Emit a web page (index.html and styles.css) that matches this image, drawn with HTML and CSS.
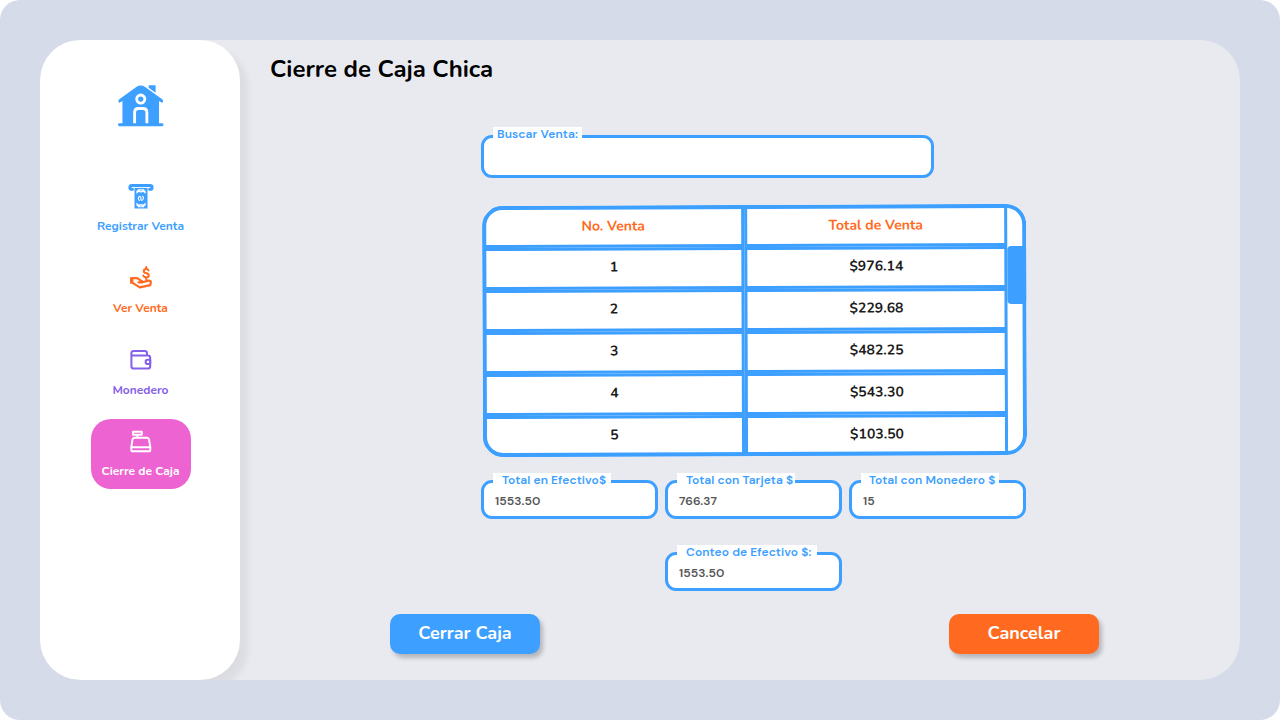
FILE: index.html
```html
<!DOCTYPE html>
<html lang="es">
<head>
<meta charset="utf-8">
<title>Cierre de Caja Chica</title>
<link rel="stylesheet" href="styles.css">
</head>
<body>
<div class="screen">
  <div class="panel">
    <nav class="sidebar">
      <svg class="home" viewBox="0 0 46 42" width="45.500" height="42">
        <path fill="#3d9fff" d="M31 0h7v7.500L31 2.500zM1 14.500 18.500 1.800Q23 -1 27.500 1.800L45 14.500Q46.500 17 44.500 17.800L41.500 16V38.500h3a1.500 1.500 0 0 1 0 3h-43a1.500 1.500 0 0 1 0-3H4.500V16l-3 1.800Q-.5 17 1 14.500z"/>
        <circle cx="23" cy="14" r="4.100" fill="#3d9fff" stroke="#fff" stroke-width="2.900"/>
        <path d="M16.800 38.500V27.500q0-4 4-4h4.400q4 0 4 4v11" fill="none" stroke="#fff" stroke-width="2.900"/>
      </svg>
      <a class="item blue">
        <svg viewBox="0 0 26 26" width="26" height="26">
          <path d="M4.500 6.300H3.800a1.900 1.900 0 0 1 0-3.800h18.400a1.900 1.900 0 0 1 0 3.800H21.500" fill="none" stroke="currentColor" stroke-width="3" stroke-linecap="round"/>
          <path d="M6.500 4.500h13v21h-13z" fill="currentColor"/>
          <path d="M4.500 4.500h17" stroke="#fff" stroke-width=".8"/>
          <path d="M10 6.300h6q.2 1.400 1.600 1.600v3.200Q16 8.800 13 8.800t-4.600 2.300V7.900Q9.800 7.700 10 6.300zM10 24.200h6q.2-1.400 1.600-1.600v-3.200Q16 21.700 13 21.700t-4.600-2.300v3.200q1.400.2 1.600 1.600z" fill="#fff"/>
          <path d="M12 8.400h2v1h-2zM12 21.200h2v1h-2z" fill="#fff"/>
          <path d="M12.400 7.400h1.200M12.400 23h1.200" stroke="currentColor" stroke-width="1"/>
          <path d="M11.300 17.500q-1.700-1.400-.6-3.300t2.200.2q-.3 3 .8 3t1.600-1.700-.7-2.500" fill="none" stroke="#fff" stroke-width="1.100" stroke-linecap="round"/>
        </svg>
        <span class="t1">Registrar Venta</span>
      </a>
      <a class="item orange">
        <svg viewBox="0 0 26 26" width="26" height="26">
          <path d="M20.500 5.500Q20 4.100 18.200 4.100q-2.400 0-2.400 1.900t2.500 2.200 2.500 2.200-2.700 2q-2.200 0-2.800-1.800M18.200 2v2M18.200 12.500v1.700" fill="none" stroke="currentColor" stroke-width="2" stroke-linecap="round"/>
          <path d="M2 12.200h3.400v6.500H2z" fill="currentColor"/>
          <path d="M5 13.200h4.200l3.700 2.500q1.400.2 1.500 1.600h-3.900M14.400 17.300l6-1.700q2.700-.2 2.400 1.400l-.5 3.200-10.500 2.200L5 18.100" fill="none" stroke="currentColor" stroke-width="2.200" stroke-linejoin="round" stroke-linecap="round"/>
        </svg>
        <span class="t2">Ver Venta</span>
      </a>
      <a class="item purple">
        <svg viewBox="0 0 26 26" width="26" height="26">
          <g fill="none" stroke="currentColor" stroke-width="2" stroke-linejoin="round">
            <path d="M3.400 8.500V6.200a2.300 2.300 0 0 1 2.300-2.300h11a2.300 2.300 0 0 1 2.300 2.300v2.300M3.400 8.500v10.900a2.300 2.300 0 0 0 2.300 2.200h14.200a2.300 2.300 0 0 0 2.300-2.200v-8.600a2.300 2.300 0 0 0-2.300-2.300H3.400"/>
            <path d="M22.200 12.800h-2.500a2.100 2.100 0 0 0 0 4.200h2.500z"/>
          </g>
        </svg>
        <span class="t3">Monedero</span>
      </a>
      <a class="item active">
        <svg viewBox="0 0 26 26" width="26" height="26">
          <g fill="none" stroke="currentColor" stroke-width="1.900" stroke-linejoin="round">
            <path d="M5 2.700h8.800v3H5zM9.400 5.700v3M3.300 18 4.500 10.500q.3-1.800 2-1.800H19q1.700 0 2 1.800L22.300 18v3.200q0 1-1 1h-17q-1 0-1-1zM3.300 18.300h19"/>
          </g>
        </svg>
        <span class="t4">Cierre de Caja</span>
      </a>
    </nav>
    <main class="main">
      <h1><span>Cierre de Caja Chica</span></h1>
      <div class="field search"><label class="l0">Buscar Venta:</label></div>
      <div class="table">
        <div class="cells">
          <div class="head h1c">No. Venta</div><div class="head h2c">Total de Venta</div>
          <div>1</div><div>$976.14</div>
          <div>2</div><div>$229.68</div>
          <div>3</div><div>$482.25</div>
          <div>4</div><div>$543.30</div>
          <div>5</div><div>$103.50</div>
        </div>
        <div class="track"><div class="thumb"></div></div>
      </div>
      <div class="totals">
        <div class="field"><label class="l1">Total en Efectivo$</label><span class="value">1553.50</span></div>
        <div class="field"><label class="l2">Total con Tarjeta $</label><span class="value">766.37</span></div>
        <div class="field"><label class="l3">Total con Monedero $</label><span class="value">15</span></div>
      </div>
      <div class="field count"><label class="l4">Conteo de Efectivo $:</label><span class="value">1553.50</span></div>
      <div class="actions">
        <button class="ok">Cerrar Caja</button>
        <button class="cancel">Cancelar</button>
      </div>
    </main>
  </div>
</div>
</body>
</html>
```
FILE: styles.css
```css
* { box-sizing: border-box; }
body { margin: 0; background: #fff; font-family: Nunito, Lato, sans-serif; font-weight: 700; }
.screen { width: 1280px; height: 720px; padding: 40px; background: #d6dbe9; border-radius: 20px; }
.panel { display: flex; height: 640px; background: #e9eaf0; border-radius: 40px; overflow: hidden; }
.sidebar { width: 200px; flex: none; height: 640px; background: #fff; border-radius: 40px; box-shadow: 8px 8px 6px rgba(0,0,0,.06); display: flex; flex-direction: column; align-items: center; padding: 45px 0 0 1px; }
.home { display: block; overflow: visible; }
.item { width: 100px; height: 70px; margin-bottom: 12px; padding-top: 10px; display: flex; flex-direction: column; align-items: center; font-size: 12px; line-height: 16px; white-space: nowrap; }
.item svg { display: block; margin-bottom: 9px; }
.item.blue { margin-top: 46px; color: #3d9fff; }
.orange { color: #ff6a20; }
.purple { color: #8560ea; }
.active { background: #ee63d2; color: #fff; border-radius: 20px; }
.item.active svg { margin-bottom: 8px; }
.main { flex: 1; position: relative; padding-top: 13px; }
h1 { margin: 0 0 49.500px 30px; height: 32px; font-size: 24px; line-height: 32px; color: #000; }
.field { display: flex; align-items: flex-start; width: 177px; height: 39px; background: #fff; border: 3px solid #3d9fff; border-radius: 11px; position: relative; font-family: "DM Sans", Inter, sans-serif; font-weight: 600; }
.field label { position: absolute; left: 9.500px; top: -10px; height: 14px; background: #fff; color: #3d9fff; font-size: 12px; line-height: 14px; letter-spacing: .1px; white-space: nowrap; }
.value { margin: 10px 0 0 11.500px; font-size: 12px; line-height: 16px; letter-spacing: .1px; color: #555; }
.search { width: 453px; height: 43.500px; margin-left: 240.500px; }
.field .l0 { width: 89px; padding-left: 4px; top: -10.500px; height: 14.500px; }
.field .l1 { width: 118px; padding-left: 9px; }
.field .l2 { width: 118px; padding-left: 9px; }
.field .l3 { width: 138px; padding-left: 8px; }
.field .l4 { width: 140px; padding-left: 9px; }
.table { position: relative; display: flex; width: 543.500px; height: 250.500px; margin: 27px 0 0 242.500px; background: #fff; border-radius: 20px; overflow: hidden; transform: translateX(-.4px) rotate(-.22deg); }
.table::after { content: ""; position: absolute; inset: 0; border: 4px solid #3d9fff; border-radius: 20px; }
.cells { width: 525px; flex: none; display: grid; grid-template-columns: 262px 263px; grid-template-rows: 41.500px repeat(5, 42px); font-size: 14px; color: #1c1c1c; }
.cells div { border: 3px solid #3d9fff; display: flex; align-items: center; justify-content: center; padding: 0 0 2px 1px; }
.cells .head { color: #ff6a20; padding: 0; }
.track { flex: 1; padding-top: 42px; }
.thumb { height: 58px; background: #3d9fff; border-radius: 4px; }
.totals { display: flex; gap: 7px; margin: 24.500px 0 0 240.500px; }
.count { margin: 32.500px 0 0 424.500px; }
.actions { display: flex; justify-content: space-between; width: 709px; margin: 23px 0 0 150px; }
button { width: 150px; height: 40px; padding: 0 0 2px; border: 0; border-radius: 10px; color: #fff; font: 700 18px Nunito, Lato, sans-serif; box-shadow: 3px 4px 4px rgba(0,0,0,.22); }
.ok { background: #3d9fff; }
.cancel { background: #ff6a20; }
```
